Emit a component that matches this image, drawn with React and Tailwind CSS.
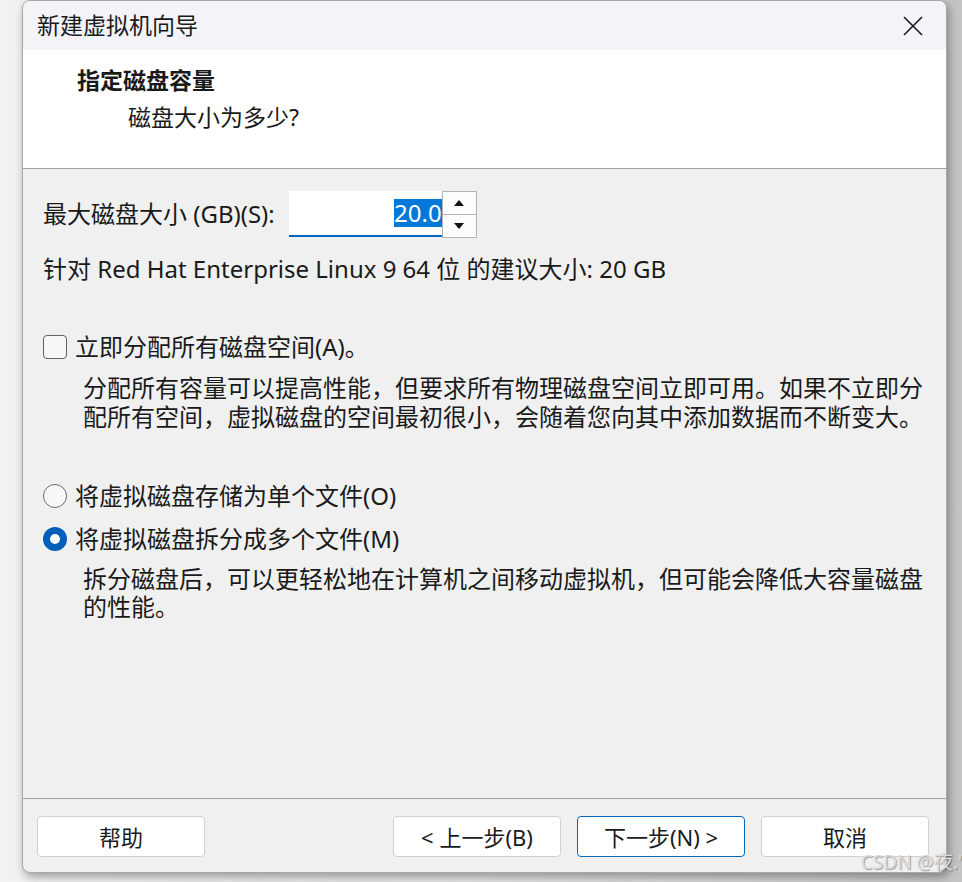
import React from "react";

const font = { fontFamily: '"Noto Sans", "Noto Sans CJK SC", sans-serif' };

function Btn({ children, primary }) {
  return (
    <button
      className={
        primary
          ? "w-[168px] h-[41px] bg-white rounded-[4px] border border-[#0067c0] text-[22px] text-[#1a1a1a] leading-[28px]"
          : "w-[168px] h-[41px] bg-white rounded-[4px] border border-[#d0d0d0] text-[22px] text-[#1a1a1a] leading-[28px]"
      }
    >
      {children}
    </button>
  );
}

export default function App() {
  return (
    <div
      className="w-[962px] h-[882px] relative overflow-hidden bg-gradient-to-r from-[#f2f2f2] via-[#e4e4e4] to-[#c4c4c4]"
      style={font}
    >
      <div className="ml-[22px] w-[925px] h-[873px] flex flex-col bg-[#f0f0f0] border border-[#a8a8a8] rounded-b-[8px] rounded-t-[8px] overflow-hidden shadow-[2px_4px_10px_rgba(0,0,0,0.35)]">
        {/* title bar */}
        <div className="h-[49px] shrink-0 bg-[#f3f3f8] flex items-center justify-between pl-[14px] pr-[22px]">
          <span className="text-[23px] text-[#1a1a1a]">新建虚拟机向导</span>
          <svg width="22" height="22" viewBox="0 0 22 22">
            <path d="M2 2 L20 20 M20 2 L2 20" stroke="#1a1a1a" strokeWidth="1.6" />
          </svg>
        </div>

        {/* header */}
        <div className="h-[119px] shrink-0 bg-white border-b border-[#a0a0a0] pl-[54px] pt-[15px]">
          <div className="text-[23px] font-bold text-[#1a1a1a] leading-[30px]">指定磁盘容量</div>
          <div className="text-[23px] text-[#1a1a1a] leading-[30px] pl-[51px] mt-[7px]">磁盘大小为多少?</div>
        </div>

        {/* body */}
        <div className="flex-1 pl-[20px] pr-[17px] text-[24px] text-[#1a1a1a]">
          <div className="mt-[22px] flex items-center h-[46px]">
            <span>最大磁盘大小 (GB)(S):</span>
            <div className="ml-[14px] w-[153px] h-[46px] bg-white border-b-2 border-[#0067c0] flex items-center justify-end">
              <span className="bg-[#0078d7] text-white text-[24px] leading-[28px]">20.0</span>
            </div>
            <div className="w-[35px] h-[47px] flex flex-col border border-[#b4b4b4] bg-[#fafafa]">
              <div className="flex-1 flex items-center justify-center border-b border-[#b4b4b4] bg-[#fdfdfd]">
                <svg width="12" height="8" viewBox="0 0 12 8"><path d="M6 1 L11 7 L1 7 Z" fill="#111" /></svg>
              </div>
              <div className="flex-1 flex items-center justify-center bg-[#fdfdfd]">
                <svg width="12" height="8" viewBox="0 0 12 8"><path d="M1 1 L11 1 L6 7 Z" fill="#111" /></svg>
              </div>
            </div>
          </div>

          <div className="mt-[17px] leading-[29px]">针对 Red Hat Enterprise Linux 9 64 位 的建议大小: 20 GB</div>

          <div className="mt-[49px] flex items-center gap-[8px] leading-[29px]">
            <span className="w-[24px] h-[24px] rounded-[4px] border-[1.5px] border-[#616161] bg-[#f7f7f7] shrink-0" />
            <span>立即分配所有磁盘空间(A)。</span>
          </div>
          <div className="mt-[12px] pl-[40px] leading-[29px]">
            分配所有容量可以提高性能，但要求所有物理磁盘空间立即可用。如果不立即分配所有空间，虚拟磁盘的空间最初很小，会随着您向其中添加数据而不断变大。
          </div>

          <div className="mt-[50px] flex items-center gap-[8px] leading-[29px]">
            <span className="w-[24px] h-[24px] rounded-full border-[1.5px] border-[#6b6b6b] bg-[#f7f7f7] shrink-0" />
            <span>将虚拟磁盘存储为单个文件(O)</span>
          </div>
          <div className="mt-[14px] flex items-center gap-[8px] leading-[29px]">
            <span className="w-[24px] h-[24px] rounded-full bg-[#005fb8] flex items-center justify-center shrink-0">
              <span className="w-[10px] h-[10px] rounded-full bg-white" />
            </span>
            <span>将虚拟磁盘拆分成多个文件(M)</span>
          </div>
          <div className="mt-[12px] pl-[40px] leading-[28px]">
            拆分磁盘后，可以更轻松地在计算机之间移动虚拟机，但可能会降低大容量磁盘的性能。
          </div>
        </div>

        {/* footer */}
        <div className="h-[74px] shrink-0 border-t border-[#a0a0a0] flex items-start pt-[17px] pl-[14px] pr-[17px]">
          <Btn>帮助</Btn>
          <div className="flex-1" />
          <div className="flex gap-[16px]">
            <Btn>&lt; 上一步(B)</Btn>
            <Btn primary>下一步(N) &gt;</Btn>
            <Btn>取消</Btn>
          </div>
        </div>
      </div>

      <div className="absolute right-[0px] bottom-[6px] text-[19px] text-[#dcdcdc] [text-shadow:1px_1px_1px_rgba(0,0,0,0.35)]">
        CSDN @夜.'
      </div>
    </div>
  );
}
